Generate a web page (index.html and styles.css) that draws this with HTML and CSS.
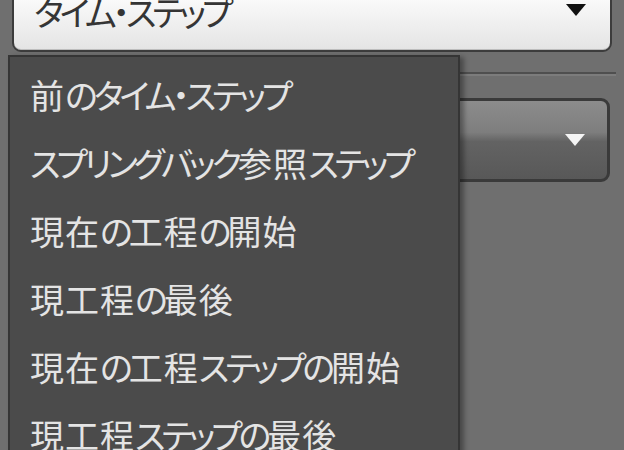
FILE: index.html
```html
<!DOCTYPE html>
<html lang="ja">
<head>
<meta charset="utf-8">
<link rel="stylesheet" href="styles.css">
</head>
<body>
<div class="panel">
  <div class="combo combo-light">
    <span class="combo-text">タイム・ステップ</span>
    <span class="arrow arrow-dark"></span>
  </div>
  <div class="separator"></div>
  <div class="combo combo-dark">
    <span class="combo-text"></span>
    <span class="arrow arrow-light"></span>
  </div>
</div>
<ul class="menu">
  <li class="item"><span class="k">前</span>のタイム・ステップ</li>
  <li class="item">スプリングバック<span class="k">参照</span>ステップ</li>
  <li class="item"><span class="k">現在</span>の<span class="k">工程</span>の<span class="k">開始</span></li>
  <li class="item"><span class="k">現工程</span>の<span class="k">最後</span></li>
  <li class="item"><span class="k">現在</span>の<span class="k">工程</span>ステップの<span class="k">開始</span></li>
  <li class="item"><span class="k">現工程</span>ステップの<span class="k">最後</span></li>
</ul>
</body>
</html>
```
FILE: styles.css
```css
html, body {
  margin: 0;
  padding: 0;
  width: 624px;
  height: 450px;
  overflow: hidden;
  background: #6f6f6f;
  font-family: "Noto Sans CJK JP", "Noto Sans", sans-serif;
}

.panel {
  display: flex;
  flex-direction: column;
  padding: 0 12px 0 12px;
}

.combo {
  display: flex;
  align-items: center;
  justify-content: space-between;
  box-sizing: border-box;
  border: 2px solid #3c3c3c;
  border-radius: 9px;
  padding: 0 22px 0 20px;
}

.combo-light {
  margin-top: -14px;
  height: 66px;
  background: linear-gradient(#ffffff, #f4f4f4 40%, #e4e4e4);
  box-shadow: inset 0 -1px 0 #bdbdbd;
}

.combo-text {
  font-size: 34px;
  font-feature-settings: "palt";
  letter-spacing: -4px;
  color: #353535;
  line-height: 40px;
  padding-bottom: 14px;
}

.arrow {
  width: 0;
  height: 0;
  border-left: 10px solid transparent;
  border-right: 10px solid transparent;
}

.arrow-dark {
  border-top: 12px solid #111;
  margin-top: -18px;
  margin-right: 2px;
}

.separator {
  margin-top: 20px;
  height: 2px;
  background: #4f4f4f;
  border-bottom: 2px solid #7c7c7c;
  margin-right: -4px;
}

.combo-dark {
  margin-top: 22px;
  height: 84px;
  margin-right: 2px;
  border-width: 3px;
  border-color: #3a3a3a;
  background: linear-gradient(#8c8c8c, #7e7e7e 40%, #636363 52%, #585858);
}

.arrow-light {
  border-top: 12px solid #f4f4f4;
}

.menu {
  position: absolute;
  left: 8px;
  top: 55px;
  width: 452px;
  height: 420px;
  margin: 0;
  padding: 3px 0 0 0;
  box-sizing: border-box;
  list-style: none;
  background: #4b4b4b;
  border: 2px solid #353535;
  box-shadow: 4px 2px 5px rgba(0, 0, 0, 0.35);
  display: flex;
  flex-direction: column;
}

.item {
  height: 68px;
  display: flex;
  align-items: center;
  padding-left: 20px;
  font-size: 34px;
  font-feature-settings: "palt";
  letter-spacing: -4px;
  color: #e4e4e4;
  white-space: nowrap;
}

.k {
  letter-spacing: 1px;
}
```
